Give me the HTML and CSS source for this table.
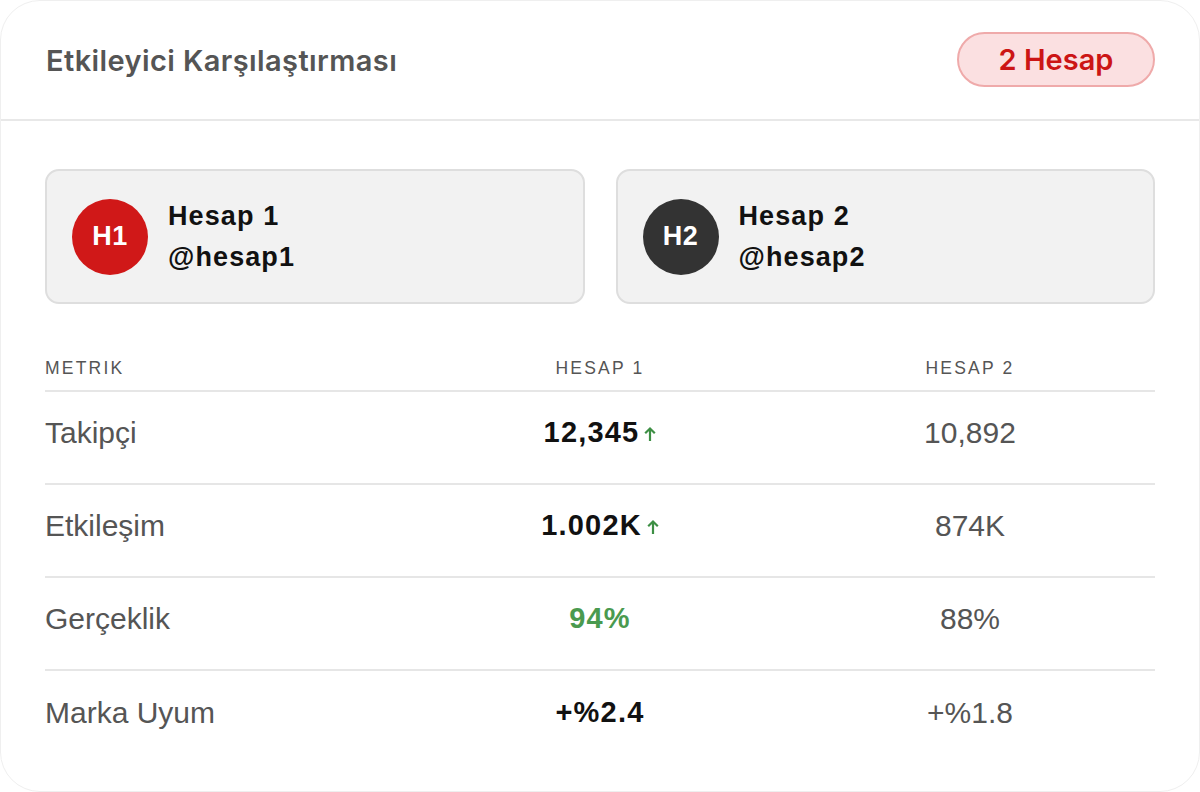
FILE: index.html
```html
<!DOCTYPE html>
<html lang="tr">
<head>
<meta charset="utf-8">
<link rel="stylesheet" href="styles.css">
</head>
<body>
<div class="card">
  <div class="header">
    <h1 class="title">Etkileyici Karşılaştırması</h1>
    <span class="badge">2 Hesap</span>
  </div>
  <div class="content">
    <div class="accounts">
      <div class="account">
        <div class="avatar red">H1</div>
        <div class="info">
          <div class="name">Hesap 1</div>
          <div class="handle">@hesap1</div>
        </div>
      </div>
      <div class="account">
        <div class="avatar dark">H2</div>
        <div class="info">
          <div class="name">Hesap 2</div>
          <div class="handle">@hesap2</div>
        </div>
      </div>
    </div>
    <div class="table">
      <div class="row head">
        <div class="cell metric">METRIK</div>
        <div class="cell">HESAP 1</div>
        <div class="cell">HESAP 2</div>
      </div>
      <div class="row">
        <div class="cell metric">Takipçi</div>
        <div class="cell strong">12,345<svg class="up" viewBox="0 0 12 15" width="12" height="15"><path d="M6 15V2.5M1.2 7.3L6 2.5l4.8 4.8" fill="none" stroke="#3d8f44" stroke-width="2.2"/></svg></div>
        <div class="cell">10,892</div>
      </div>
      <div class="row">
        <div class="cell metric">Etkileşim</div>
        <div class="cell strong">1.002K<svg class="up" viewBox="0 0 12 15" width="12" height="15"><path d="M6 15V2.5M1.2 7.3L6 2.5l4.8 4.8" fill="none" stroke="#3d8f44" stroke-width="2.2"/></svg></div>
        <div class="cell">874K</div>
      </div>
      <div class="row">
        <div class="cell metric">Gerçeklik</div>
        <div class="cell strong green">94%</div>
        <div class="cell">88%</div>
      </div>
      <div class="row last">
        <div class="cell metric">Marka Uyum</div>
        <div class="cell strong">+%2.4</div>
        <div class="cell">+%1.8</div>
      </div>
    </div>
  </div>
</div>
</body>
</html>
```
FILE: styles.css
```css
* { box-sizing: border-box; }
html, body { margin: 0; padding: 0; background: #ffffff; }
body { font-family: "Liberation Sans", Arial, sans-serif; }

.card {
  width: 1200px;
  height: 792px;
  border: 1px solid #efefef;
  border-radius: 40px;
  background: #fff;
  overflow: hidden;
}

.header {
  height: 120px;
  display: flex;
  align-items: center;
  justify-content: space-between;
  padding: 0 44px 0 45px;
  border-bottom: 2px solid #e8e8e8;
}
.title {
  margin: 0;
  font-family: Inter, "Liberation Sans", sans-serif;
  font-size: 29px;
  font-weight: 600;
  color: #555;
  letter-spacing: 0.4px;
}
.badge {
  width: 198px;
  height: 55px;
  border-radius: 28px;
  border: 2px solid #efaaaa;
  background: #fbe0e1;
  color: #cc1515;
  font-family: Inter, "Liberation Sans", sans-serif;
  font-size: 29px;
  font-weight: 600;
  display: flex;
  align-items: center;
  justify-content: center;
  margin-top: -2px;
}

.content { padding: 48px 44px 0 44px; }

.accounts {
  display: grid;
  grid-template-columns: 1fr 1fr;
  gap: 31px;
}
.account {
  height: 135px;
  background: #f2f2f2;
  border: 2px solid #dedede;
  border-radius: 14px;
  display: flex;
  align-items: center;
  padding-left: 25px;
  gap: 20px;
}
.avatar {
  width: 76px;
  height: 76px;
  border-radius: 50%;
  color: #fff;
  font-weight: 700;
  font-size: 27px;
  letter-spacing: 0.5px;
  display: flex;
  align-items: center;
  justify-content: center;
}
.avatar.red { background: #d01818; }
.avatar.dark { background: #333333; }
.info { display: flex; flex-direction: column; gap: 3px; margin-top: 0; }
.name, .handle {
  font-size: 27px;
  font-weight: 700;
  color: #111;
  line-height: 38px;
  letter-spacing: 1.1px;
}

.table { margin-top: 52px; }
.row {
  display: grid;
  grid-template-columns: 1fr 1fr 1fr;
  align-items: center;
  height: 93px;
  border-bottom: 2px solid #e6e6e6;
}
.row.head {
  height: 36px;
  align-items: start;
  padding-top: 2px;
}
.row.last { border-bottom: none; }
.cell {
  text-align: center;
  font-size: 30px;
  color: #555;
  display: flex;
  justify-content: center;
  align-items: center;
  margin-top: -10px;
}
.cell.metric { justify-content: flex-start; }
.row.head .cell {
  font-size: 17.5px;
  letter-spacing: 2.2px;
  color: #555;
  line-height: 20px;
  margin-top: 0;
}
.cell.strong {
  font-size: 29px;
  font-weight: 700;
  color: #111;
  letter-spacing: 1.2px;
}
.cell.green { color: #4a9a4f; }
.up { flex-shrink: 0; margin-left: 5px; margin-top: 1px; }
```
